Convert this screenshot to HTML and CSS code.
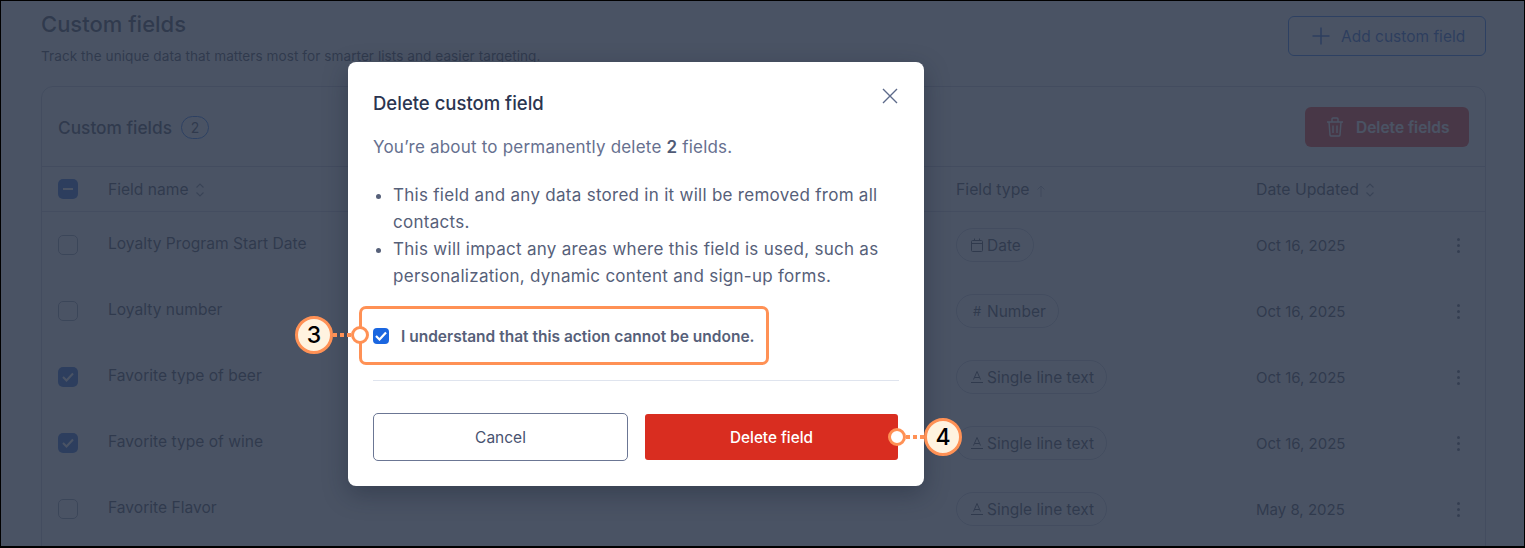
FILE: index.html
```html
<!DOCTYPE html>
<html>
<head>
  <title>Custom fields</title>
  <link rel="stylesheet" href="styles.css">
</head>
<body>

<div class="frame">
  <div class="page">
    <div class="page-head">
      <div>
        <h1>Custom fields</h1>
        <p class="page-sub">Track the unique data that matters most for smarter lists and easier targeting.</p>
      </div>
      <button class="btn-add">
        <svg width="20" height="20" viewBox="0 0 20 20"><path d="M10 1.500v17M1.500 10h17" fill="none" stroke="currentColor" stroke-width="1.500"/></svg>
        Add custom field
      </button>
    </div>

    <div class="card">
      <div class="card-head">
        <div class="card-title">Custom fields <span class="count">2</span></div>
        <button class="btn-delete">
          <svg width="18" height="20" viewBox="0 0 18 20" fill="none" stroke="currentColor" stroke-width="1.400"><path d="M1 5h16M3 5l1 13a1 1 0 0 0 1 1h8a1 1 0 0 0 1-1l1-13M6 5V2a1 1 0 0 1 1-1h4a1 1 0 0 1 1 1v3M7 8.500v7.500M11 8.500v7.500"/></svg>
          Delete fields
        </button>
      </div>

      <div class="row row-head">
        <div><span class="box box-on"><i class="dash"></i></span></div>
        <div class="name">Field name <svg class="sort" width="10" height="16" viewBox="0 0 10 16"><path d="M1.500 5.500L5 2l3.500 3.500M1.500 10.500L5 14l3.500-3.500" fill="none" stroke="currentColor" stroke-width="1.200"/></svg></div>
        <div>Field type <svg class="sort sort-up" width="10" height="14" viewBox="0 0 10 14"><path d="M5 13V2M1.500 5.500L5 2l3.500 3.500" fill="none" stroke="currentColor" stroke-width="1"/></svg></div>
        <div>Date Updated <svg class="sort" width="10" height="16" viewBox="0 0 10 16"><path d="M1.500 5.500L5 2l3.500 3.500M1.500 10.500L5 14l3.500-3.500" fill="none" stroke="currentColor" stroke-width="1.200"/></svg></div>
        <div></div>
      </div>

      <div class="row">
        <div><span class="box"></span></div>
        <div class="name">Loyalty Program Start Date</div>
        <div><span class="pill"><svg width="14" height="14" viewBox="0 0 14 14" fill="none" stroke="currentColor"><path d="M2.500 2.500h9a1 1 0 0 1 1 1v9a1 1 0 0 1-1 1h-9a1 1 0 0 1-1-1v-9a1 1 0 0 1 1-1zM1.500 5.500h11M4.500 .5v2M9.500 .5v2"/></svg>Date</span></div>
        <div>Oct 16, 2025</div>
        <div class="kebab"><i></i><i></i><i></i></div>
      </div>
      <div class="row">
        <div><span class="box"></span></div>
        <div class="name">Loyalty number</div>
        <div><span class="pill"><span class="hash">#</span>Number</span></div>
        <div>Oct 16, 2025</div>
        <div class="kebab"><i></i><i></i><i></i></div>
      </div>
      <div class="row">
        <div><span class="box box-on"><svg width="12" height="10" viewBox="0 0 12 10"><path d="M1 5l3.500 3.500L11 1.500" fill="none" stroke="currentColor" stroke-width="2"/></svg></span></div>
        <div class="name">Favorite type of beer</div>
        <div><span class="pill"><svg width="14" height="14" viewBox="0 0 14 14" fill="none" stroke="currentColor"><path d="M3.500 9.500L7 1.500l3.500 8M4.500 7.500h5M1 12.500h12"/></svg>Single line text</span></div>
        <div>Oct 16, 2025</div>
        <div class="kebab"><i></i><i></i><i></i></div>
      </div>
      <div class="row">
        <div><span class="box box-on"><svg width="12" height="10" viewBox="0 0 12 10"><path d="M1 5l3.500 3.500L11 1.500" fill="none" stroke="currentColor" stroke-width="2"/></svg></span></div>
        <div class="name">Favorite type of wine</div>
        <div><span class="pill"><svg width="14" height="14" viewBox="0 0 14 14" fill="none" stroke="currentColor"><path d="M3.500 9.500L7 1.500l3.500 8M4.500 7.500h5M1 12.500h12"/></svg>Single line text</span></div>
        <div>Oct 16, 2025</div>
        <div class="kebab"><i></i><i></i><i></i></div>
      </div>
      <div class="row">
        <div><span class="box"></span></div>
        <div class="name">Favorite Flavor</div>
        <div><span class="pill"><svg width="14" height="14" viewBox="0 0 14 14" fill="none" stroke="currentColor"><path d="M3.500 9.500L7 1.500l3.500 8M4.500 7.500h5M1 12.500h12"/></svg>Single line text</span></div>
        <div>May 8, 2025</div>
        <div class="kebab"><i></i><i></i><i></i></div>
      </div>
    </div>
  </div>

  <div class="overlay">
    <div class="modal">
      <div class="modal-head">
        <h2>Delete custom field</h2>
        <svg class="close" width="16" height="16" viewBox="0 0 16 16"><path d="M1 1l14 14M15 1L1 15" fill="none" stroke="currentColor" stroke-width="1.400"/></svg>
      </div>
      <p class="lead">You’re about to permanently delete <b>2</b> fields.</p>
      <ul class="notes">
        <li>This field and any data stored in it will be removed from all contacts.</li>
        <li>This will impact any areas where this field is used, such as personalization, dynamic content and sign-up forms.</li>
      </ul>
      <label class="confirm">
        <span class="tick"><svg width="12" height="10" viewBox="0 0 12 10"><path d="M1 5l3.500 3.500L11 1.500" fill="none" stroke="#fff" stroke-width="2.200"/></svg></span>
        I understand that this action cannot be undone.
      </label>
      <div class="modal-foot">
        <button class="btn-cancel">Cancel</button>
        <button class="btn-confirm">Delete field</button>
      </div>
    </div>
  </div>

  <!-- help article annotations -->
  <div class="mark-box"></div>
  <div class="callout callout-3"><span class="bubble">3</span><span class="dots"></span><span class="ring"></span></div>
  <div class="callout callout-4"><span class="ring"></span><span class="dots"></span><span class="bubble">4</span></div>
</div>

</body>
</html>
```

FILE: styles.css
```css
* {
  box-sizing: border-box;
}

body {
  margin: 0;
  font-family: Inter, Arial, sans-serif;
  background-color: #000;
}

button {
  font-family: inherit;
}

.frame {
  position: relative;
  height: 548px;
  border: 1px solid #000;
  border-bottom-width: 2px;
  background-color: #fff;
  overflow: hidden;
}

/* Page behind the dialog */
.page {
  padding: 9px 38px 0 40px;
  color: #3c4252;
}

.page-head {
  display: flex;
  justify-content: space-between;
  align-items: flex-start;
  height: 76px;
}

h1 {
  margin: 0;
  font-size: 22px;
  line-height: 28px;
  font-weight: 500;
}

.page-sub {
  margin: 9px 0 0;
  font-size: 13.600px;
  line-height: 18px;
  letter-spacing: 0.05px;
}

.btn-add {
  display: flex;
  align-items: center;
  gap: 10px;
  width: 198px;
  height: 40px;
  margin-top: 6px;
  padding: 0 0 0 22px;
  border: 1px solid #1f6feb;
  border-radius: 6px;
  background: none;
  color: #1f5fd0;
  font-size: 15.500px;
}

.card {
  border: 1px solid #c4cad6;
  border-radius: 12px;
  height: 600px;
}

.card-head {
  display: flex;
  justify-content: space-between;
  align-items: center;
  height: 80px;
  padding: 0 16px;
  border-bottom: 1px solid #c4cad6;
}

.card-title {
  display: flex;
  align-items: center;
  gap: 9px;
  margin-top: 2px;
  font-size: 17.300px;
  font-weight: 500;
}

.count {
  display: flex;
  align-items: center;
  justify-content: center;
  width: 28px;
  height: 23px;
  border: 1px solid #1f6feb;
  border-radius: 12px;
  font-size: 14px;
  font-weight: 400;
}

.btn-delete {
  display: flex;
  align-items: center;
  gap: 12px;
  width: 164px;
  height: 40px;
  padding: 1px 0 0 21px;
  border: none;
  border-radius: 6px;
  background-color: #f02c20;
  color: #fff;
  font-size: 15.500px;
  font-weight: 600;
}

.row {
  display: grid;
  grid-template-columns: 50px 848px 300px 1fr 29px;
  align-items: center;
  height: 66px;
  padding-left: 16px;
  font-size: 15px;
}

.row-head {
  height: 45px;
  border-bottom: 1px solid #ccd1db;
  font-size: 15.800px;
}

.name {
  margin-top: -3px;
  font-size: 15.600px;
}

.row-head .name {
  margin-top: 0;
}

.sort {
  vertical-align: -3px;
  margin-left: 2px;
  color: #7b8394;
}

.sort-up {
  color: #a9b0be;
}

.box {
  display: flex;
  align-items: center;
  justify-content: center;
  width: 20px;
  height: 20px;
  border: 1px solid #8f97a8;
  border-radius: 5px;
  color: #fff;
}

.box-on {
  border: none;
  background-color: #1f5fd0;
}

.dash {
  width: 10px;
  height: 2px;
  background-color: #fff;
}

.pill {
  display: inline-flex;
  align-items: center;
  gap: 3px;
  height: 34px;
  padding: 0 12px 0 13px;
  border: 1px solid #c4cad6;
  border-radius: 17px;
  font-size: 15.500px;
}

.hash {
  width: 14px;
  font-size: 13px;
  text-align: center;
}

.kebab {
  display: flex;
  flex-direction: column;
  align-items: center;
  gap: 3px;
  width: 4px;
  color: #5a6070;
}

.kebab i {
  width: 3px;
  height: 3px;
  border-radius: 50%;
  background-color: currentColor;
}

/* Dim layer and dialog */
.overlay {
  position: absolute;
  inset: 0;
  padding: 61px 0 0 347px;
  background-color: rgba(47, 57, 77, 0.87);
}

.modal {
  width: 576px;
  height: 424px;
  padding: 0 25px;
  border-radius: 8px;
  background-color: #fff;
  box-shadow: 0 8px 24px rgba(20, 28, 45, 0.35);
}

.modal-head {
  display: flex;
  justify-content: space-between;
  align-items: flex-start;
  height: 65px;
  color: #2b3550;
}

h2 {
  margin: 0;
  padding-top: 29px;
  font-size: 18.500px;
  line-height: 24px;
  font-weight: 500;
}

.close {
  margin: 26px 1px 0 0;
  color: #5d6a8a;
}

.lead {
  margin: 8px 0 0;
  font-size: 17px;
  line-height: 24px;
  letter-spacing: 0.2px;
  color: #66708f;
}

.lead b {
  color: #505a75;
  font-weight: 600;
}

.notes {
  margin: 23px 0 0;
  padding-left: 20px;
  font-size: 17px;
  line-height: 27px;
  letter-spacing: 0.28px;
  color: #566079;
}

.confirm {
  display: flex;
  align-items: center;
  gap: 12px;
  margin-top: 34px;
  height: 24px;
  font-size: 15.500px;
  font-weight: 600;
  color: #566079;
}

.tick {
  display: flex;
  align-items: center;
  justify-content: center;
  width: 16px;
  height: 16px;
  border-radius: 4px;
  background-color: #1a66e0;
}

.modal-foot {
  display: flex;
  align-items: center;
  gap: 17px;
  margin-top: 32px;
  padding-top: 32px;
  border-top: 1px solid #dfe4ee;
}

.btn-cancel {
  width: 255px;
  height: 48px;
  border: 1px solid #6b7694;
  border-radius: 5px;
  background-color: #fff;
  color: #485270;
  font-size: 15.500px;
}

.btn-confirm {
  width: 253px;
  height: 46px;
  border: none;
  border-radius: 3px;
  background-color: #d92d20;
  color: #fff;
  font-size: 15.300px;
  font-weight: 500;
}

/* Orange annotations drawn on top of the screenshot */
.mark-box {
  position: absolute;
  left: 358px;
  top: 305px;
  width: 410px;
  height: 59px;
  border: 3px solid #ff9155;
  border-radius: 7px;
}

.callout {
  position: absolute;
  display: flex;
  align-items: center;
}

.callout-3 {
  left: 294px;
  top: 315px;
}

.callout-4 {
  left: 887px;
  top: 417px;
}

.bubble {
  display: flex;
  align-items: center;
  justify-content: center;
  width: 38px;
  height: 38px;
  border: 3px solid #ff9155;
  border-radius: 50%;
  background-color: #fff3e0;
  color: #000;
  font-size: 23px;
  font-weight: 500;
}

.dots {
  width: 18px;
  height: 4px;
  background: repeating-linear-gradient(90deg, #ff9155 0 4px, transparent 4px 7px);
}

.ring {
  width: 18px;
  height: 18px;
  border: 3px solid #ff9155;
  border-radius: 50%;
  background-color: #fff;
}
```
